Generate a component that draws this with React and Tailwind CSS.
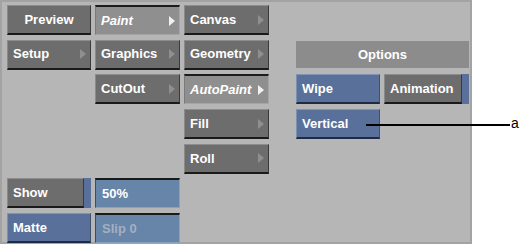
const font = { fontFamily: '"Liberation Sans", Arial, sans-serif' }

function Tri({ light }) {
  return (
    <svg width="6" height="10" viewBox="0 0 6 10" className="absolute right-[4px] top-1/2 -translate-y-1/2">
      <polygon points="0,0 6,5 0,10" fill={light ? '#f2f2f2' : '#8f8f8f'} />
    </svg>
  )
}

function Btn({ label, arrow, selected, center, className = '' }) {
  const base = selected
    ? 'bg-[#8f8f8f] border-t-2 border-t-[#1c1c1c] border-l border-l-[#7a7a7a] border-b border-b-[#a5a5a5] border-r border-r-[#a5a5a5] italic'
    : 'bg-[#6d6d6d] border-t border-t-[#8d8d8d] border-l border-l-[#8a8a8a] border-b-2 border-b-[#1a1a1a] border-r border-r-[#3a3a3a]'
  return (
    <div
      className={`relative flex h-[30px] items-center text-[13px] font-bold text-white ${center ? 'justify-center' : 'pl-[5px]'} ${base} ${className}`}
    >
      {label}
      {arrow && <Tri light={selected} />}
    </div>
  )
}

function BlueBtn({ label, className = '' }) {
  return (
    <div className={`flex h-[30px] items-center border-t border-t-[#7f95b3] border-l border-l-[#7a90ae] border-b-2 border-b-[#1f2a44] border-r border-r-[#3f516c] bg-[#58709a] pl-[5px] text-[13px] font-bold text-white ${className}`}>
      {label}
    </div>
  )
}

function Field({ label, dim }) {
  return (
    <div className={`flex h-[30px] items-center border-t-2 border-t-[#1a1a1a] border-l border-l-[#3f4c60] border-b border-b-[#8aa0bd] border-r border-r-[#8aa0bd] bg-[#6784a9] pl-[6px] text-[13px] font-bold ${dim ? 'text-[#a3b0c2]' : 'text-white'}`}>
      {label}
    </div>
  )
}

export default function App() {
  return (
    <div className="relative h-[248px] w-[526px] bg-white" style={font}>
      <div className="h-[244px] w-[472px] border-2 border-[#a3a3a3] bg-[#b6b6b6] pl-[5px] pt-[3px]">
        <div className="grid grid-cols-[84px_85px_85px_19px_84px_85px] grid-rows-[30px_30px_30px_30px_30px_30px_30px] gap-x-[4px] gap-y-[4.7px]">
          <Btn label="Preview" center />
          <Btn label="Paint" arrow selected />
          <Btn label="Canvas" arrow />
          <div className="col-span-3" />

          <Btn label="Setup" arrow />
          <Btn label="Graphics" arrow />
          <Btn label="Geometry" arrow />
          <div />
          <div className="col-span-2 flex h-[27px] items-center justify-center self-center bg-[#8c8c8c] text-[13px] font-bold text-white">
            Options
          </div>

          <div />
          <Btn label="CutOut" arrow />
          <Btn label="AutoPaint" arrow selected />
          <div />
          <BlueBtn label="Wipe" />
          <div className="flex h-[30px] bg-[#58709a]">
            <Btn label="Animation" className="w-[78px]" />
          </div>

          <div />
          <div />
          <Btn label="Fill" arrow />
          <div />
          <BlueBtn label="Vertical" />
          <div />

          <div />
          <div />
          <Btn label="Roll" arrow />
          <div className="col-span-3" />

          <div className="flex h-[30px] bg-[#58709a]">
            <Btn label="Show" className="w-[77px]" />
          </div>
          <Field label="50%" />
          <div className="col-span-4" />

          <BlueBtn label="Matte" />
          <Field label="Slip 0" dim />
          <div className="col-span-4" />
        </div>
      </div>

      <div className="absolute left-[366px] top-[124px] h-[2px] w-[144px] bg-black" />
      <div className="absolute left-[511px] top-[115px] text-[14px] leading-[16px] text-black">a</div>
    </div>
  )
}
